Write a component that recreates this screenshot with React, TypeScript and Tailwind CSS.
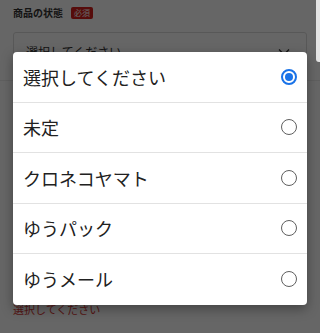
import React, { useState } from 'react';

const font = { fontFamily: '"Noto Sans CJK JP", "Noto Sans", sans-serif' };

const options = ['選択してください', '未定', 'クロネコヤマト', 'ゆうパック', 'ゆうメール'];

export default function App() {
  const [selected, setSelected] = useState(0);

  return (
    <div className="relative w-[320px] h-[333px] overflow-hidden bg-white" style={font}>
      {/* page behind the dialog */}
      <div className="px-[13px] pt-[6px]">
        <div className="flex items-center gap-[8px] h-[14px]">
          <span className="text-[10px] font-bold text-[#333] leading-none">商品の状態</span>
          <span className="bg-[#d6201c] text-white text-[8px] leading-none px-[3px] h-[12px] flex items-center rounded-[2px]">必須</span>
        </div>
        <div className="mt-[12px] h-[40px] border border-[#ddd] rounded-[3px] flex items-center justify-between pl-[12px] pr-[16px]">
          <span className="text-[12px] text-[#333]">選択してください</span>
          <svg width="12" height="8" viewBox="0 0 12 8" fill="none" stroke="#333" strokeWidth="1.3">
            <path d="M1 1.5l5 5 5-5" />
          </svg>
        </div>
      </div>
      <div className="mt-[8px] h-[1px] bg-[#eee]" />
      <div className="px-[13px] pt-[166px]">
        <div className="h-[40px] border border-[#d63a35] rounded-[3px]" />
        <p className="mt-[17px] text-[11px] leading-none text-[#d63a35]">選択してください</p>
      </div>

      {/* dim overlay */}
      <div className="absolute inset-0 bg-black/60" />
      <div className="absolute right-0 top-0 w-[4px] h-[62px] bg-[#e4e4e4] rounded-bl-[3px]" />

      {/* picker dialog */}
      <div className="absolute left-[13px] top-[52px] w-[294px] bg-white rounded-[4px] shadow-[0_4px_12px_rgba(0,0,0,0.35)] overflow-hidden">
        {options.map((label, i) => (
          <button
            key={label}
            onClick={() => setSelected(i)}
            className={`w-full h-[50.5px] flex items-center justify-between pl-[10px] pr-[10px] text-left ${
              i < options.length - 1 ? 'border-b border-[#e2e2e2]' : ''
            }`}
          >
            <span className="text-[18px] text-[#212121] leading-none">{label}</span>
            {i === selected ? (
              <span className="w-[16px] h-[16px] rounded-full border-2 border-[#1a73e8] flex items-center justify-center">
                <span className="w-[8px] h-[8px] rounded-full bg-[#1a73e8]" />
              </span>
            ) : (
              <span className="w-[16px] h-[16px] rounded-full border-[1.5px] border-[#5f5f5f]" />
            )}
          </button>
        ))}
      </div>
    </div>
  );
}
